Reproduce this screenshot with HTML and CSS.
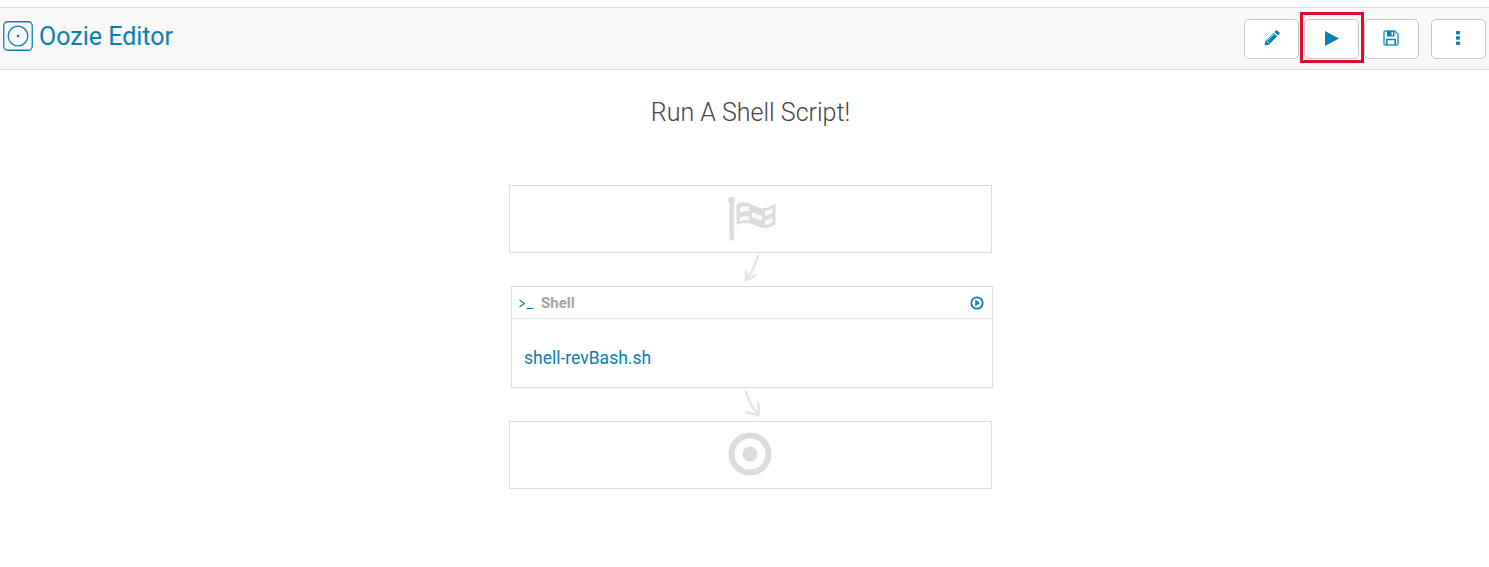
FILE: index.html
```html
<!DOCTYPE html>
<html lang="en">
  <head>
    <meta charset="UTF-8" />
    <title>Oozie Editor</title>
    <link rel="stylesheet" href="styles.css">
  </head>
  <body>
    <div class="toolbar">
      <div class="brand">
        <svg class="brand-icon" width="30" height="30" viewBox="0 0 30 30">
          <rect x="0.75" y="0.75" width="28.5" height="28.5" rx="4" fill="none" stroke="#0b80b0" stroke-width="1.3" />
          <circle cx="15" cy="15" r="9.8" fill="none" stroke="#0b80b0" stroke-width="1.3" />
          <circle cx="15" cy="15" r="1.3" fill="#0b80b0" />
        </svg>
        <span class="brand-name">Oozie Editor</span>
      </div>
      <div class="actions">
        <button class="btn">
          <svg width="16" height="16" viewBox="0 0 16 16">
            <path fill="#0b80b0" d="M0.500 15.500l.8-4.300 8.300-8.300 3.500 3.500-8.300 8.300zM10.500 2l1.300-1.300c.5-.5 1.100-.5 1.600 0l1.900 1.900c.5.5.5 1.100 0 1.600L14 5.500z" />
            <path fill="none" stroke="#fff" stroke-width="0.800" d="M2.600 10.900l2.500 2.500M3.500 10.500l6.500-6.500" />
          </svg>
        </button>
        <button class="btn">
          <svg width="14" height="15" viewBox="0 0 14 15">
            <path fill="#0b80b0" d="M0 0l14 7.500L0 15z" />
          </svg>
        </button>
        <button class="btn btn-save">
          <svg width="16" height="16" viewBox="0 0 16 16">
            <path fill="none" stroke="#2a9ccb" stroke-width="1.500" d="M1 2.200c0-.7.5-1.200 1.200-1.200h9.600L15 4.200v9.600c0 .7-.5 1.200-1.200 1.200H2.200c-.7 0-1.200-.5-1.200-1.200z" />
            <path fill="#0b80b0" d="M4 1h7.500v5.500H4z" />
            <path fill="#fff" d="M8.500 2h1.500v3.300H8.500z" />
            <path fill="none" stroke="#0b80b0" stroke-width="1.500" d="M3.800 15V9.500h8.400V15" />
          </svg>
        </button>
        <button class="btn btn-more">
          <svg width="4" height="14" viewBox="0 0 4 14">
            <rect width="4" height="3.400" rx="0.800" fill="#0b80b0" />
            <rect y="5.300" width="4" height="3.400" rx="0.800" fill="#0b80b0" />
            <rect y="10.600" width="4" height="3.400" rx="0.800" fill="#0b80b0" />
          </svg>
        </button>
      </div>
      <div class="highlight"></div>
    </div>

    <div class="workflow">
      <h1 class="workflow-name">Run A Shell Script!</h1>

      <div class="node node-start">
        <svg width="50" height="44" viewBox="0 0 50 44">
          <circle cx="5.500" cy="3" r="3.500" fill="#dcdcdc" />
          <rect x="3.500" y="4" width="4.500" height="39.500" rx="1.500" fill="#dcdcdc" />
          <path fill="#dcdcdc" d="M10.500 7.500c5-2.500 10-2.500 14.500-.5s8.500 5 14 4c4-.7 7-2.500 10.500-4.500v21c-3.500 2-7 3.500-11 3.500-5 0-9-3-14-4.500-5-1-10-.5-14 1.500z" />
          <path fill="#fff" fill-opacity="0.9" d="M14 10.500c3-1.300 6-1.500 9-1v5c-3-.5-6-.3-9 1zM26 15c3 1.500 6 3 10 3.500v5c-4-.5-7-2-10-3.500zM39 14c2.500-.5 5-1.500 7.500-3v5c-2.500 1.500-5 2.500-7.500 3zM14 20.500c3-1.200 6-1.500 9-1v4c-3-.5-6-.3-9 1zM39 23.500c2.500-.5 5-1.500 7.500-2.700v4.200c-2.500 1.500-5 2.500-7.500 3z" />
        </svg>
      </div>

      <svg class="arrow" width="20" height="33" viewBox="0 0 20 33">
        <path fill="none" stroke="#e4e4e4" stroke-width="2.400" d="M17 2c-2 9-6 17-12 25M5.500 17c-.5 3-.5 7-.5 10 3-1 7-3 10-5" />
      </svg>

      <div class="card">
        <div class="card-head">
          <span class="card-icon">
            <svg width="15" height="12" viewBox="0 0 15 12">
              <path fill="none" stroke="#0b80b0" stroke-width="1.100" d="M0.500 3l5 3.500-5 3.500M7.500 11.500h7" />
            </svg>
          </span>
          <span class="card-type">Shell</span>
          <svg class="card-run" width="14" height="14" viewBox="0 0 14 14">
            <circle cx="7" cy="7" r="5.700" fill="none" stroke="#0b80b0" stroke-width="1.800" />
            <path fill="#0b80b0" d="M5.200 3.800L10 7l-4.800 3.200z" />
          </svg>
        </div>
        <div class="card-body">
          <a class="script-link">shell-revBash.sh</a>
        </div>
      </div>

      <svg class="arrow" width="20" height="33" viewBox="0 0 20 33">
        <path fill="none" stroke="#e4e4e4" stroke-width="2.400" d="M5 3c2 9 6 17 12.500 24M4.500 24c4 1 9 2.500 13 3 .5-4 0-9-.5-13" />
      </svg>

      <div class="node node-end">
        <svg class="end-icon" width="44" height="44" viewBox="0 0 44 44">
          <circle cx="22" cy="22" r="18.500" fill="none" stroke="#dcdcdc" stroke-width="6" />
          <circle cx="22" cy="22" r="7.500" fill="#dcdcdc" />
        </svg>
      </div>
    </div>
  </body>
</html>
```

FILE: styles.css
```css
body {
  font-family: Roboto, "Liberation Sans", sans-serif;
  margin: 0;
  padding-top: 7px;
  background-color: #fff;
  color: #444;
}

.toolbar {
  position: relative;
  display: flex;
  align-items: center;
  justify-content: space-between;
  height: 61px;
  padding: 0 3px;
  background-color: #f8f8f8;
  border-top: 1px solid #dcdcdc;
  border-bottom: 1px solid #dcdcdc;
}

.brand {
  display: flex;
  align-items: center;
  gap: 6px;
  margin-top: -5px;
}

.brand-name {
  font-size: 25px;
  color: #0b80b0;
}

.actions {
  display: flex;
  gap: 5px;
  margin-top: 1px;
}

.btn {
  display: flex;
  align-items: center;
  justify-content: center;
  width: 55px;
  height: 40px;
  padding: 0 0 2px;
  background-color: #fff;
  border: 1px solid #c8c8c8;
  border-radius: 5px;
}

.btn-save {
  padding-right: 2px;
}

.btn-more {
  margin-left: 7px;
  padding-right: 2px;
}

.highlight {
  position: absolute;
  top: 4px;
  left: 1300px;
  width: 58px;
  height: 45px;
  border: 3px solid #e00b2e;
}

.workflow {
  display: flex;
  flex-direction: column;
  align-items: center;
  padding-left: 12px;
}

.workflow-name {
  margin: 29px 0 58px;
  height: 28px;
  font-size: 25px;
  line-height: 28px;
  font-weight: 300;
  color: #444;
}

.node {
  display: flex;
  align-items: center;
  justify-content: center;
  box-sizing: border-box;
  width: 483px;
  height: 68px;
  border: 1px solid #dcdcdc;
}

.end-icon {
  margin: 0 1px 2px 0;
}

.arrow {
  display: block;
}

.card {
  box-sizing: border-box;
  width: 482px;
  height: 102px;
  margin-left: 3px;
  border: 1px solid #dcdcdc;
}

.card-head {
  display: flex;
  align-items: center;
  height: 31px;
  padding: 0 8px 0 7px;
  border-bottom: 1px solid #e4e4e4;
}

.card-icon {
  display: flex;
  width: 22px;
}

.card-type {
  flex: 1;
  font-size: 15px;
  font-weight: 700;
  color: #a3a3a3;
}

.card-body {
  padding: 28px 12px 0;
}

.script-link {
  font-size: 17.5px;
  line-height: 22px;
  color: #0b80b0;
}
```
